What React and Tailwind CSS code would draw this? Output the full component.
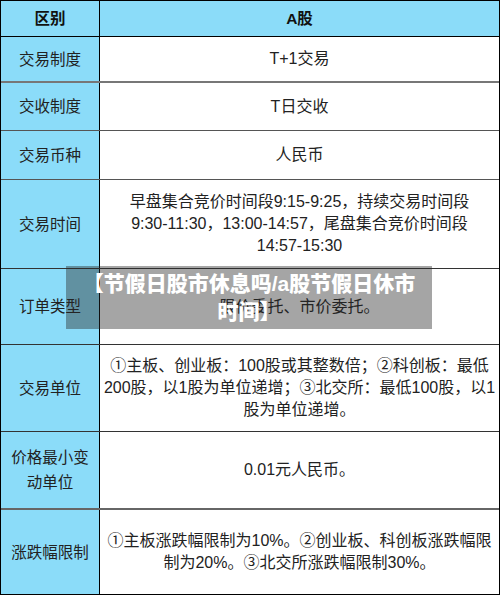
import React from 'react'

const rows = [
    { h: 'h-[46px]', k: ['交易制度'], v: ['T+1交易'], b: 'border-b-2 border-b-[#777]' },
    { h: 'h-[48px]', k: ['交收制度'], v: ['T日交收'], b: 'border-b border-b-[#555]' },
    { h: 'h-[49px]', k: ['交易币种'], v: ['人民币'], b: 'border-b border-b-[#555]' },
    { h: 'h-[89px]', k: ['交易时间'], v: ['早盘集合竞价时间段9:15-9:25，持续交易时间段', '9:30-11:30，13:00-14:57，尾盘集合竞价时间段', '14:57-15:30'], b: 'border-b border-b-[#333]' },
    { h: 'h-[76px]', k: ['订单类型'], v: ['限价委托、市价委托。'], b: 'border-b border-b-[#333]' },
    { h: 'h-[87px]', k: ['交易单位'], v: ['①主板、创业板：100股或其整数倍；②科创板：最低', '200股，以1股为单位递增；③北交所：最低100股，以1', '股为单位递增。'], b: 'border-b border-b-[#333]' },
    { h: 'h-[78px]', k: ['价格最小变', '动单位'], v: ['0.01元人民币。'], b: 'border-b-2 border-b-[#666]' },
    { h: 'h-[84px]', k: ['涨跌幅限制'], v: ['①主板涨跌幅限制为10%。②创业板、科创板涨跌幅限', '制为20%。③北交所涨跌幅限制30%。'], b: '' },
]

const App = () => {
    return (
        <div className="relative w-[500px] h-[595px] bg-white text-[#222] font-['Liberation_Sans','Noto_Sans_CJK_SC',sans-serif]">
            <div className="w-[500px] h-[595px] border border-black flex flex-col">
                <div className="flex h-[36px] bg-[#8bdcf9] border-b border-b-black font-bold text-[15.5px] text-[#111]">
                    <div className="w-[99px] flex items-center justify-center border-r border-r-black">区别</div>
                    <div className="flex-1 flex items-center justify-center">A股</div>
                </div>
                {rows.map((r, i) => (
                    <div key={i} className={`flex ${r.h} ${r.b}`}>
                        <div className="w-[99px] shrink-0 bg-[#8bdcf9] border-r border-r-black flex flex-col items-center justify-center text-[15.5px] leading-[25px]">
                            {r.k.map((t, j) => <span key={j}>{t}</span>)}
                        </div>
                        <div className="flex-1 flex flex-col items-center justify-center text-[16px] leading-[22px] text-center">
                            {r.v.map((t, j) => <span key={j} className="whitespace-nowrap">{t}</span>)}
                        </div>
                    </div>
                ))}
            </div>
            <div className="absolute left-[66px] top-[266px] w-[366px] h-[63px] bg-[rgba(40,40,40,0.42)] flex flex-col items-center justify-center text-white font-black text-[21px] leading-[28px]">
                <span>【节假日股市休息吗/a股节假日休市</span>
                <span>时间】</span>
            </div>
        </div>
    )
}

export default App
